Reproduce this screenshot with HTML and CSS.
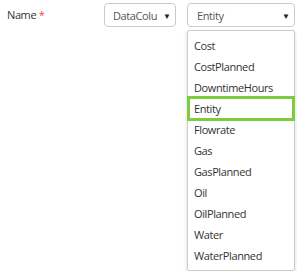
FILE: index.html
```html
<!DOCTYPE html>
<html>
<head>
<meta charset="utf-8">
<link rel="stylesheet" href="styles.css">
</head>
<body>
<div class="row">
  <div class="label">Name <span class="req">*</span></div>
  <div class="select small"><span class="val">DataColu</span><span class="arrow">▼</span></div>
  <div class="combo">
    <div class="select wide"><span class="val">Entity</span><span class="arrow">▼</span></div>
    <ul class="list">
      <li>Cost</li>
      <li>CostPlanned</li>
      <li>DowntimeHours</li>
      <li class="active">Entity</li>
      <li>Flowrate</li>
      <li>Gas</li>
      <li>GasPlanned</li>
      <li>Oil</li>
      <li>OilPlanned</li>
      <li>Water</li>
      <li>WaterPlanned</li>
    </ul>
  </div>
</div>
</body>
</html>
```
FILE: styles.css
```css
html, body {
  margin: 0;
  padding: 0;
  background: #fff;
  font-family: "Open Sans", "Noto Sans", sans-serif;
  font-size: 11px;
  letter-spacing: -0.4px;
  color: #333;
}
.row {
  display: flex;
  align-items: flex-start;
  padding: 3px 0 0 7px;
}
.label {
  width: 97px;
  line-height: 24px;
  color: #333;
}
.req { color: #e8474a; }
.select {
  box-sizing: border-box;
  height: 24px;
  border: 1px solid #ccc;
  border-radius: 4px;
  display: flex;
  align-items: center;
  justify-content: space-between;
  padding: 0 4px 0 8px;
  color: #555;
}
.val { white-space: nowrap; }
.small { width: 72px; }
.combo {
  margin-left: 11px;
  width: 108px;
}
.wide { width: 108px; padding-left: 9px; }
.arrow { font-size: 8px; color: #222; letter-spacing: 0; }
.list {
  list-style: none;
  margin: 3px 0 0 0;
  padding: 4px 0 3px 0;
  border: 1px solid #ccc;
  border-radius: 2px;
  box-shadow: 0 2px 4px rgba(0,0,0,0.15);
  height: 232px;
}
.list li {
  height: 21px;
  line-height: 21px;
  padding-left: 6px;
  color: #333;
  box-sizing: border-box;
}
.list li.active {
  border: 3px solid #7dcc3c;
  height: 25px;
  line-height: 19px;
  margin: -2px -1px;
  padding-left: 4px;
  position: relative;
}
```
